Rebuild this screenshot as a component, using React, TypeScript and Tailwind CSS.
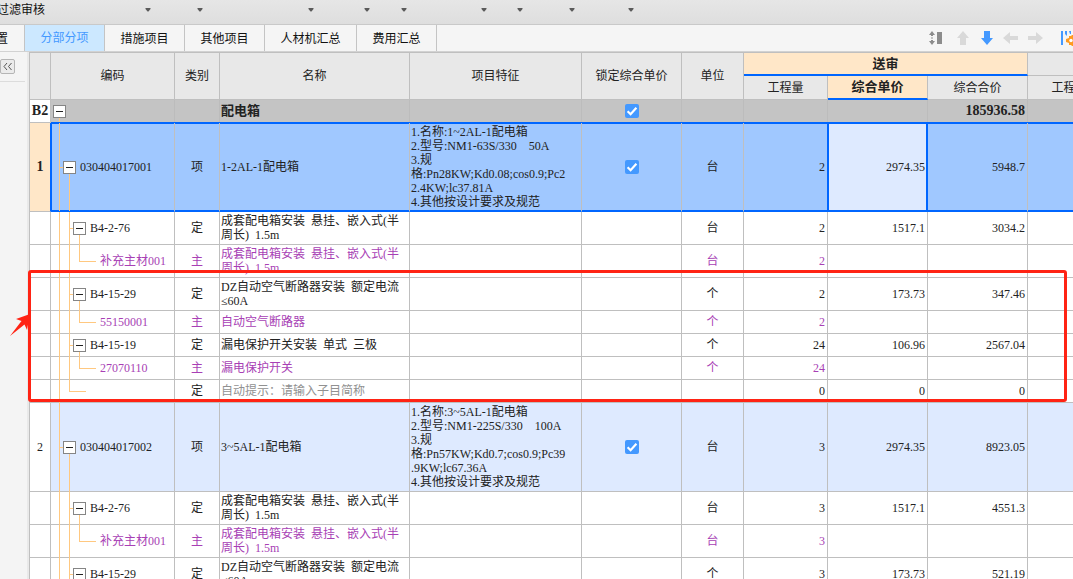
import type { ReactNode } from 'react';
import clsx from 'clsx';

type RowKind = 'section' | 'item' | 'quota' | 'material' | 'hint';

type Row = {
  no?: string;
  kind: RowKind;
  code?: string;
  type?: string;
  name: string[];
  feature?: string[];
  locked?: boolean;
  unit?: string;
  qty?: string;
  price?: string;
  total?: string;
  tall?: boolean;
  selected?: boolean;
};

const rows: Row[] = [
  { no: 'B2', kind: 'section', name: ['配电箱'], locked: true, total: '185936.58' },
  {
    no: '1',
    kind: 'item',
    code: '030404017001',
    type: '项',
    name: ['1-2AL-1配电箱'],
    feature: [
      '1.名称:1~2AL-1配电箱',
      '2.型号:NM1-63S/330  50A',
      '3.规',
      '格:Pn28KW;Kd0.08;cos0.9;Pc2',
      '2.4KW;lc37.81A',
      '4.其他按设计要求及规范',
    ],
    locked: true,
    unit: '台',
    qty: '2',
    price: '2974.35',
    total: '5948.7',
    selected: true,
  },
  { kind: 'quota', code: 'B4-2-76', type: '定', name: ['成套配电箱安装 悬挂、嵌入式(半', '周长) 1.5m'], unit: '台', qty: '2', price: '1517.1', total: '3034.2', tall: true },
  { kind: 'material', code: '补充主材001', type: '主', name: ['成套配电箱安装 悬挂、嵌入式(半', '周长) 1.5m'], unit: '台', qty: '2', tall: true },
  { kind: 'quota', code: 'B4-15-29', type: '定', name: ['DZ自动空气断路器安装 额定电流', '≤60A'], unit: '个', qty: '2', price: '173.73', total: '347.46', tall: true },
  { kind: 'material', code: '55150001', type: '主', name: ['自动空气断路器'], unit: '个', qty: '2' },
  { kind: 'quota', code: 'B4-15-19', type: '定', name: ['漏电保护开关安装 单式 三极'], unit: '个', qty: '24', price: '106.96', total: '2567.04' },
  { kind: 'material', code: '27070110', type: '主', name: ['漏电保护开关'], unit: '个', qty: '24' },
  { kind: 'hint', type: '定', name: ['自动提示：请输入子目简称'], qty: '0', price: '0', total: '0' },
  {
    no: '2',
    kind: 'item',
    code: '030404017002',
    type: '项',
    name: ['3~5AL-1配电箱'],
    feature: [
      '1.名称:3~5AL-1配电箱',
      '2.型号:NM1-225S/330  100A',
      '3.规',
      '格:Pn57KW;Kd0.7;cos0.9;Pc39',
      '.9KW;lc67.36A',
      '4.其他按设计要求及规范',
    ],
    locked: true,
    unit: '台',
    qty: '3',
    price: '2974.35',
    total: '8923.05',
  },
  { kind: 'quota', code: 'B4-2-76', type: '定', name: ['成套配电箱安装 悬挂、嵌入式(半', '周长) 1.5m'], unit: '台', qty: '3', price: '1517.1', total: '4551.3', tall: true },
  { kind: 'material', code: '补充主材001', type: '主', name: ['成套配电箱安装 悬挂、嵌入式(半', '周长) 1.5m'], unit: '台', qty: '3', tall: true },
  { kind: 'quota', code: 'B4-15-29', type: '定', name: ['DZ自动空气断路器安装 额定电流', '≤60A'], unit: '个', qty: '3', price: '173.73', total: '521.19', tall: true },
];

const tabs = ['措施项目', '其他项目', '人材机汇总', '费用汇总'];

// en spaces are half as wide as a CJK character, like the digits
const spaced = (text?: string) => text?.replaceAll(' ', '\u2002');

function Caret() {
  return (
    <svg className="h-[4px] w-[6px]" viewBox="0 0 6 4" fill="#5a5a5a">
      <path d="M.5 0h5v1L3.500 3.500h-1L.5 1z" />
    </svg>
  );
}

function Toggle({ label }: { label: string }) {
  return (
    <button aria-label={label} className="relative flex size-[13px] shrink-0 items-center justify-center border border-[#858585] bg-white">
      <span className="h-px w-[7px] bg-[#222]" />
    </button>
  );
}

const line = 'absolute bg-[#ffc880]';

function TreeCell({ row }: { row: Row }) {
  const end = row.selected ? 'bottom-0' : '-bottom-px';
  switch (row.kind) {
    case 'section':
      return (
        <div className="flex items-center pl-[2px]">
          <span className={clsx(line, 'top-1/2 left-2 w-px', end)} />
          <Toggle label="收起 B2" />
        </div>
      );
    case 'item':
      return (
        <div className="flex items-center gap-1 pl-3">
          <span className={clsx(line, 'top-0 left-2 w-px', end)} />
          <span className={clsx(line, 'top-1/2 left-2 h-px w-1')} />
          <span className={clsx(line, 'top-1/2 left-[18px] w-px', end)} />
          <Toggle label={`收起 ${row.code}`} />
          {row.code}
        </div>
      );
    case 'quota':
      return (
        <div className="flex items-center gap-1 pl-[22px]">
          <span className={clsx(line, 'top-0 left-2 w-px', end)} />
          <span className={clsx(line, 'top-0 left-[18px] w-px', end)} />
          <span className={clsx(line, 'top-1/2 left-[18px] h-px w-1')} />
          <span className={clsx(line, 'top-1/2 left-7 w-px', end)} />
          <Toggle label={`收起 ${row.code}`} />
          {row.code}
        </div>
      );
    case 'material':
      return (
        <div className="pl-[49px]">
          <span className={clsx(line, 'top-0 left-2 w-px', end)} />
          <span className={clsx(line, 'top-0 left-[18px] w-px', end)} />
          <span className={clsx(line, 'top-0 bottom-1/2 left-7 w-px')} />
          <span className={clsx(line, 'top-1/2 left-7 h-px w-[17px]')} />
          {row.code}
        </div>
      );
    default:
      return (
        <>
          <span className={clsx(line, 'top-0 left-2 w-px', end)} />
          <span className={clsx(line, 'top-0 bottom-1/2 left-[18px] w-px')} />
          <span className={clsx(line, 'top-1/2 left-[18px] h-px w-[17px]')} />
        </>
      );
  }
}

function LockBox({ label }: { label: string }) {
  return (
    <label className="relative mx-auto block size-[14px]">
      <input type="checkbox" defaultChecked aria-label={label} className="block size-[14px] appearance-none rounded-[2px] bg-[#4499ff]" />
      <svg className="pointer-events-none absolute inset-0" viewBox="0 0 14 14" fill="none" stroke="#fff" strokeWidth="2.2">
        <path d="M2.6 7.2l3 3 5.8-6.4" />
      </svg>
    </label>
  );
}

function GridRow({ row }: { row: Row }) {
  const bold = row.kind === 'section';
  const sel = row.selected;
  const base = clsx(
    'border-r border-b p-0 whitespace-nowrap',
    sel ? 'border-b-[#0066ff]' : 'border-b-[#bfbfbf]'
  );
  const edge = bold ? 'border-r-[#bcbcbc]' : 'border-r-[#bfbfbf]';
  const frame = sel && 'shadow-[0_-1px_0_#0066ff,inset_0_1px_0_#0066ff,inset_0_-1px_0_#0066ff]';
  const cell = clsx(base, edge, frame);

  return (
    <tr
      className={clsx(
        bold && 'bg-[#c4c4c4]',
        row.kind === 'item' && (sel ? 'bg-[#a0c8ff]' : 'bg-[#deeaff]'),
        row.kind === 'material' && 'text-[#a83fb5]',
        row.kind === 'item' ? 'h-[89px]' : row.tall ? 'h-[33px]' : 'h-[23px]'
      )}
    >
      <th
        scope="row"
        className={clsx(
          'border-r border-b border-b-[#bfbfbf] p-0',
          sel ? 'border-r-[#0066ff] bg-[#ffe7c8]' : 'border-r-[#bfbfbf] bg-white',
          bold || sel ? 'text-[14px] font-bold' : 'font-normal'
        )}
      >
        {row.no}
      </th>
      <td className={clsx(base, edge, 'relative', sel && 'shadow-[0_-1px_0_#0066ff,inset_1px_1px_0_#0066ff,inset_0_-1px_0_#0066ff]')}>
        <TreeCell row={row} />
      </td>
      <td className={clsx(cell, 'text-center')}>{row.type}</td>
      <td className={clsx(cell, 'pl-px', row.kind === 'hint' && 'text-[#919191]', bold && 'text-[13px] font-bold')}>
        {row.name.map((part) => (
          <div key={part}>{spaced(part)}</div>
        ))}
      </td>
      <td className={clsx(cell, 'pl-px')}>
        {row.feature?.map((part) => (
          <div key={part}>{spaced(part)}</div>
        ))}
      </td>
      <td className={cell}>{row.locked && <LockBox label={`锁定综合单价 ${row.name[0]}`} />}</td>
      <td className={clsx(cell, 'text-center')}>{row.unit}</td>
      <td className={clsx(base, frame, 'pr-0.5 text-right', sel ? 'border-r-[#0066ff]' : edge)}>{row.qty}</td>
      <td
        className={clsx(
          base,
          'pr-0.5 text-right',
          sel
            ? 'border-r-[#0066ff] bg-[#deeaff] shadow-[0_-1px_0_#0066ff,inset_1px_1px_0_#0066ff,inset_-1px_-1px_0_#0066ff]'
            : edge
        )}
      >
        {row.price}
      </td>
      <td className={clsx(cell, 'pr-0.5 text-right', bold && 'text-[14px] font-bold')}>{row.total}</td>
      <td className={cell} />
    </tr>
  );
}

function Head({ children, className, rowSpan, colSpan }: { children?: ReactNode; className?: string; rowSpan?: number; colSpan?: number }) {
  return (
    <th rowSpan={rowSpan} colSpan={colSpan} className={clsx('border-r border-[#bfbfbf] p-0', className ?? 'border-b font-normal')}>
      {children}
    </th>
  );
}

function IconButton({ label, children, className }: { label: string; children: ReactNode; className: string }) {
  return (
    <button aria-label={label} className={clsx('h-4 shrink-0 overflow-hidden', className)}>
      {children}
    </button>
  );
}

export default function App() {
  return (
    <div className="flex h-screen flex-col overflow-hidden bg-[#f5f5f5] font-['Liberation_Sans','Noto_Sans_CJK_SC',sans-serif] text-[12px] leading-[14px] text-[#222]">
      {/* Ribbon */}
      <header className="flex h-[25px] shrink-0 items-start border-b border-[#c9c9c9] bg-gradient-to-b from-[#e6e6e6] to-[#dedede]">
        <button className="-ml-[3px] flex h-5 w-[154px] shrink-0 items-center justify-between whitespace-nowrap text-[#111]">
          过滤审核
          <Caret />
        </button>
        <button aria-label="菜单 2" className="flex h-5 w-[52px] items-center justify-end"><Caret /></button>
        <button aria-label="菜单 3" className="flex h-5 w-[111px] items-center justify-end"><Caret /></button>
        <button aria-label="菜单 4" className="flex h-5 w-[56px] items-center justify-end"><Caret /></button>
        <button aria-label="菜单 5" className="flex h-5 w-[37px] items-center justify-end"><Caret /></button>
        <button aria-label="菜单 6" className="flex h-5 w-[80px] items-center justify-end"><Caret /></button>
        <button aria-label="菜单 7" className="flex h-5 w-[36px] items-center justify-end"><Caret /></button>
        <button aria-label="菜单 8" className="flex h-5 w-[52px] items-center justify-end"><Caret /></button>
        <button aria-label="菜单 9" className="flex h-5 w-[59px] items-center justify-end"><Caret /></button>
      </header>

      {/* Tabs */}
      <nav className="flex h-[27px] shrink-0 items-stretch border-b border-[#d2d2d2] text-[#111]">
        <button className="flex w-[25px] items-center justify-end overflow-hidden border-r border-[#c4c4c4] pt-0.5 pr-4">置</button>
        <button className="w-20 border-r border-[#c4c4c4] bg-[#cce8ff] text-[#4499ff]">分部分项</button>
        {tabs.map((tab) => (
          <button key={tab} className={clsx('border-r border-[#c4c4c4] pt-0.5', tab.length > 4 ? 'w-[92px]' : 'w-20')}>
            {tab}
          </button>
        ))}
        <div className="ml-auto flex items-center gap-[9px]">
          <IconButton label="行高" className="w-4">
            <svg viewBox="0 0 16 16" fill="#8c8c8c">
              <path d="M1 5l3-4 3 4H5v1H3V5zM1 11l3 4 3-4H5v-1H3v1z" />
              <path d="M3 7h2v2H3z" fill="#c4c4c4" />
              <rect x="9" y="2" width="5" height="12" />
            </svg>
          </IconButton>
          <IconButton label="上移" className="w-4">
            <svg viewBox="0 0 16 16" fill="#d9d9d9"><path d="M10 1l6 7h-3v7H7V8H4z" /></svg>
          </IconButton>
          <IconButton label="下移" className="w-4">
            <svg viewBox="0 0 16 16" fill="#4499ff"><path d="M9 15l6-7h-3V1H6v7H3z" /></svg>
          </IconButton>
          <IconButton label="左移" className="w-4">
            <svg viewBox="0 0 16 16" fill="#d9d9d9"><path d="M0 8l7-6v4h8v4H7v4z" /></svg>
          </IconButton>
          <IconButton label="右移" className="w-4">
            <svg viewBox="0 0 16 16" fill="#d9d9d9"><path d="M15 8L8 2v4H0v4h8v4z" /></svg>
          </IconButton>
          <IconButton label="列设置" className="w-[20px]">
            <svg className="ml-2 size-4 max-w-none" viewBox="0 0 16 16">
              <path d="M0 1h2v14H0zM4 1h2v5l-2-2zM8 1h2v3H9z" fill="#4499ff" />
              <path d="M8 6h2l1-1h1l1 1h2v9h-2l-1 1h-1l-1-1H8v-2l-3-1V9l3-1z" fill="#ff9a1f" />
              <circle cx="10" cy="10.500" r="1.700" fill="#fff" />
            </svg>
          </IconButton>
        </div>
      </nav>

      <main className="flex min-h-0 flex-1">
        <aside className="flex w-[29px] shrink-0 flex-col border-r-2 border-[#e9e9e9] bg-[#f4f4f4]">
          <div className="mr-0.5 flex h-[30px] items-center border-b border-[#dcdcdc]">
            <button aria-label="展开侧栏" className="flex size-[15px] items-center justify-center rounded-[2px] border border-[#b5b5b5] bg-[#ebebeb]">
              <svg className="size-[11px]" viewBox="0 0 11 11" fill="none" stroke="#555">
                <path d="M5 2L2 5.500l3 3.500M9.500 2l-3 3.500 3 3.500" />
              </svg>
            </button>
          </div>
        </aside>

        <div className="relative min-w-0 flex-1">
          <div className="h-full overflow-hidden border-t border-l border-[#bfbfbf] bg-white">
            <table className="w-[1082px] table-fixed border-separate border-spacing-0 font-['Liberation_Serif','Noto_Sans_CJK_SC',serif]">
              <colgroup>
                <col className="w-[21px]" />
                <col className="w-[124px]" />
                <col className="w-[45px]" />
                <col className="w-[190px]" />
                <col className="w-[172px]" />
                <col className="w-[100px]" />
                <col className="w-[62px]" />
                <col className="w-[84px]" />
                <col className="w-[100px]" />
                <col className="w-[100px]" />
                <col className="w-[84px]" />
              </colgroup>
              <thead className="bg-[#e8e8e8]">
                <tr className="h-[23px]">
                  <Head rowSpan={2} />
                  <Head rowSpan={2}>编码</Head>
                  <Head rowSpan={2}>类别</Head>
                  <Head rowSpan={2}>名称</Head>
                  <Head rowSpan={2}>项目特征</Head>
                  <Head rowSpan={2}>锁定综合单价</Head>
                  <Head rowSpan={2}>单位</Head>
                  <Head colSpan={3} className="border-b-2 border-b-[#0066ff] bg-[#ffe7c8] text-[13px] font-bold">送审</Head>
                  <Head />
                </tr>
                <tr className="h-[24px]">
                  <Head>工程量</Head>
                  <Head className="border-b-2 border-b-[#0066ff] bg-[#ffe7c8] text-[13px] font-bold">综合单价</Head>
                  <Head>综合合价</Head>
                  <Head>工程量</Head>
                </tr>
              </thead>
              <tbody>
                {rows.map((row, i) => (
                  <GridRow key={i} row={row} />
                ))}
              </tbody>
            </table>
          </div>

          {/* Red markup over the grid */}
          <div className="pointer-events-none absolute top-[218px] right-[6px] -left-px h-[132px] rounded-[3px] border-[3px] border-[#ff2314]" />
          <svg className="pointer-events-none absolute top-[261px] -left-5 h-[24px] w-[22px]" viewBox="0 0 22 24" fill="#ff2314">
            <path d="M21 1L7 6l5.500 2L1 23l14.500-11.500L18 17z" />
          </svg>
        </div>
      </main>
    </div>
  );
}
